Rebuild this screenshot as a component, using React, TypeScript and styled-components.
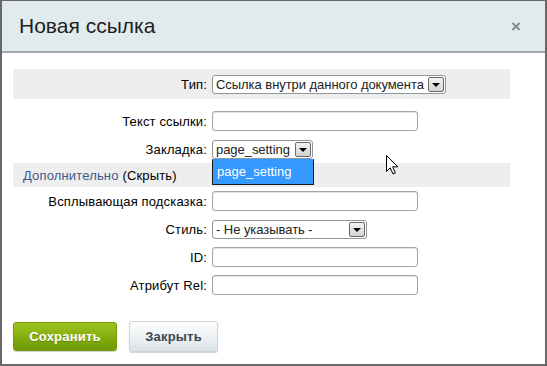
import React from "react";
import styled, { createGlobalStyle } from "styled-components";

const Global = createGlobalStyle`
  html, body { margin: 0; padding: 0; background: #ffffff; }
  body { font-family: "Liberation Sans", Arial, sans-serif; }
  * { box-sizing: border-box; }
`;

const Window = styled.div`
  position: relative;
  width: 547px;
  height: 366px;
  border: 2px solid #686868;
  border-top-width: 1px;
  background: #ffffff;
  display: flex;
  flex-direction: column;
  overflow: hidden;
`;

const TitleBar = styled.div`
  height: 52px;
  flex: none;
  background: #e1eaed;
  border-bottom: 2px solid #a2a8ab;
  display: flex;
  align-items: center;
  justify-content: space-between;
  padding: 0 24px 0 17px;
`;

const Title = styled.div`
  font-size: 21px;
  color: #1e1e1e;
`;

const CloseX = styled.div`
  font-size: 17px;
  font-weight: bold;
  color: #7f8c97;
  line-height: 1;
`;

const Body = styled.div`
  padding: 16px 35px 0 11px;
  display: flex;
  flex-direction: column;
`;

const Row = styled.div<{ $h: number; $shaded?: boolean }>`
  height: ${(p) => p.$h}px;
  background: ${(p) => (p.$shaded ? "#eeeeee" : "transparent")};
  display: grid;
  grid-template-columns: 194px 1fr;
  column-gap: 5px;
  align-items: center;
`;

const Spacer = styled.div<{ $h: number }>`
  height: ${(p) => p.$h}px;
`;

const Label = styled.div`
  text-align: right;
  font-size: 13px;
  letter-spacing: 0.15px;
  color: #000;
  white-space: nowrap;
`;

const Field = styled.div`
  display: flex;
  align-items: center;
`;

const Input = styled.div`
  width: 206px;
  height: 20px;
  border: 1px solid #9ea4a9;
  border-radius: 3px;
  background: #fff;
  box-shadow: inset 0 1px 1px rgba(0, 0, 0, 0.12);
`;

const SelectBox = styled.div<{ $w: number }>`
  position: relative;
  width: ${(p) => p.$w}px;
  height: 19px;
  border: 1px solid #8e959b;
  border-radius: 3px;
  background: #fff;
  display: flex;
  align-items: center;
  justify-content: space-between;
  padding-left: 3px;
  padding-right: 1px;
`;

const SelectText = styled.span`
  font-size: 13px;
  letter-spacing: -0.05px;
  color: #222;
  white-space: nowrap;
`;

const ArrowBtn = styled.div`
  width: 16px;
  height: 15px;
  flex: none;
  margin-left: 2px;
  border: 1px solid #6a6a6a;
  border-radius: 2px;
  background: linear-gradient(#f4f4f4, #d2d2d2);
  display: flex;
  align-items: center;
  justify-content: center;
  &::after {
    content: "";
    border-left: 4px solid transparent;
    border-right: 4px solid transparent;
    border-top: 4px solid #000;
    margin-top: 1px;
  }
`;

const DropList = styled.div`
  position: absolute;
  top: 18px;
  left: -1px;
  width: 102px;
  height: 26px;
  background: #3399ff;
  border: 1px solid #1a1a1a;
  border-top-color: #3399ff;
  z-index: 5;
  display: flex;
  align-items: center;
  padding-left: 4px;
  font-size: 13px;
  color: #fff;
`;

const ToggleRow = styled.div`
  height: 24px;
  background: #eeeeee;
  display: flex;
  align-items: center;
  padding-left: 10px;
  font-size: 13px;
  letter-spacing: 0.15px;
  color: #000;
`;

const MoreLink = styled.span`
  color: #3f5a8c;
  margin-right: 4px;
`;

const Footer = styled.div`
  display: flex;
  align-items: center;
  gap: 12px;
  padding-top: 22px;
`;

const Button = styled.div<{ $primary?: boolean }>`
  height: ${(p) => (p.$primary ? 29 : 31)}px;
  width: ${(p) => (p.$primary ? 104 : 89)}px;
  border-radius: 3px;
  display: flex;
  align-items: center;
  justify-content: center;
  font-size: 13px;
  font-weight: bold;
  letter-spacing: 0.2px;
  color: ${(p) => (p.$primary ? "#ffffff" : "#3c4753")};
  background: ${(p) =>
    p.$primary
      ? "linear-gradient(#9cc41f, #6e9a00)"
      : "linear-gradient(#ffffff, #dbe3e7)"};
  border: 1px solid ${(p) => (p.$primary ? "#729c0c" : "#cdd4d8")};
  box-shadow: 0 1px 1px rgba(0, 0, 0, 0.18);
  text-shadow: ${(p) => (p.$primary ? "0 1px 0 rgba(0,0,0,0.25)" : "none")};
`;

const Cursor = styled.svg`
  position: absolute;
  left: 383px;
  top: 153px;
  z-index: 10;
`;

const Select = ({ w, text, open }: { w: number; text: string; open?: string }) => (
  <SelectBox $w={w}>
    <SelectText>{text}</SelectText>
    <ArrowBtn />
    {open && <DropList>{open}</DropList>}
  </SelectBox>
);

export default function App() {
  return (
    <>
      <Global />
      <Window>
        <TitleBar>
          <Title>Новая ссылка</Title>
          <CloseX>×</CloseX>
        </TitleBar>
        <Body>
          <Row $h={30} $shaded>
            <Label>Тип:</Label>
            <Field>
              <Select w={234} text="Ссылка внутри данного документа" />
            </Field>
          </Row>
          <Spacer $h={8} />
          <Row $h={28}>
            <Label>Текст ссылки:</Label>
            <Field>
              <Input />
            </Field>
          </Row>
          <Row $h={28}>
            <Label>Закладка:</Label>
            <Field>
              <Select w={101} text="page_setting" open="page_setting" />
            </Field>
          </Row>
          <ToggleRow>
            <MoreLink>Дополнительно</MoreLink>(Скрыть)
          </ToggleRow>
          <Row $h={28}>
            <Label>Всплывающая подсказка:</Label>
            <Field>
              <Input />
            </Field>
          </Row>
          <Row $h={28}>
            <Label>Стиль:</Label>
            <Field>
              <Select w={155} text="- Не указывать -" />
            </Field>
          </Row>
          <Row $h={28}>
            <Label>ID:</Label>
            <Field>
              <Input />
            </Field>
          </Row>
          <Row $h={28}>
            <Label>Атрибут Rel:</Label>
            <Field>
              <Input />
            </Field>
          </Row>
          <Footer>
            <Button $primary>Сохранить</Button>
            <Button>Закрыть</Button>
          </Footer>
        </Body>
        <Cursor width="14" height="22" viewBox="0 0 14 22">
          <path
            d="M1.5 1.5 L1.5 17.5 L5.2 13.8 L8 20 L10.4 19 L7.7 12.8 L12.8 12.8 Z"
            fill="#ffffff"
            stroke="#000000"
            strokeWidth="1"
            strokeLinejoin="miter"
          />
        </Cursor>
      </Window>
    </>
  );
}
